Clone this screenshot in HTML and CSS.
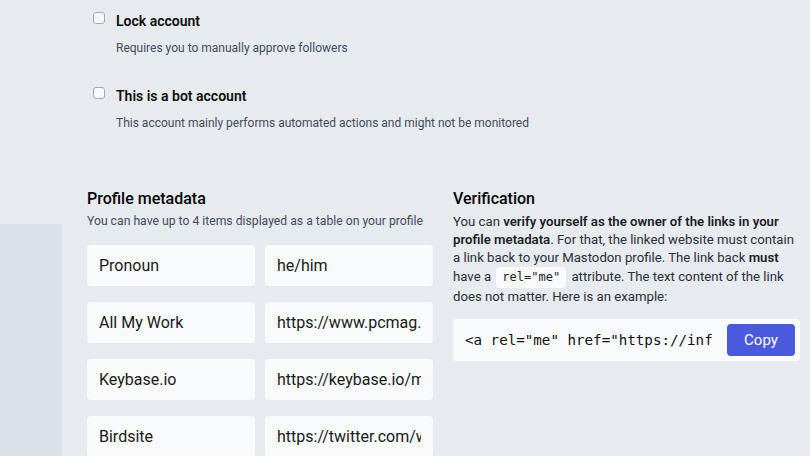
FILE: index.html
```html
<!DOCTYPE html>
<html>
<head>
<meta charset="utf-8">
<link rel="stylesheet" href="styles.css">
</head>
<body>
<div class="page">
  <aside class="side"><div class="side-fill"></div></aside>
  <main class="content">
    <div class="checks">
      <div class="check">
        <span class="box"></span>
        <div class="check-text">
          <div class="check-label">Lock account</div>
          <div class="check-hint">Requires you to manually approve followers</div>
        </div>
      </div>
      <div class="check">
        <span class="box"></span>
        <div class="check-text">
          <div class="check-label">This is a bot account</div>
          <div class="check-hint">This account mainly performs automated actions and might not be monitored</div>
        </div>
      </div>
    </div>
    <div class="cols">
      <section class="col">
        <h3 class="heading">Profile metadata</h3>
        <p class="sub">You can have up to 4 items displayed as a table on your profile</p>
        <div class="fields">
          <div class="field"><span class="val">Pronoun</span></div><div class="field"><span class="val">he/him</span></div>
          <div class="field"><span class="val">All My Work</span></div><div class="field"><span class="val">https://www.pcmag.com/authors/max-eddy</span></div>
          <div class="field"><span class="val">Keybase.io</span></div><div class="field"><span class="val">https://keybase.io/maxeddy</span></div>
          <div class="field"><span class="val">Birdsite</span></div><div class="field"><span class="val">https://twitter.com/wiredmaxeddy</span></div>
        </div>
      </section>
      <section class="col">
        <h3 class="heading">Verification</h3>
        <p class="para">You can <strong>verify yourself as the owner of the links in your profile metadata</strong>. For that, the linked website must contain a link back to your Mastodon profile. The link back <strong>must</strong> have a <code class="chip">rel="me"</code> attribute. The text content of the link does not matter. Here is an example:</p>
        <div class="codebox">
          <span class="code">&lt;a rel="me" href="https://infosec.exchange/@wired">Mastodon&lt;/a></span>
          <button class="copy">Copy</button>
        </div>
      </section>
    </div>
  </main>
</div>
</body>
</html>
```
FILE: styles.css
```css
* { box-sizing: border-box; }
html, body { margin: 0; padding: 0; }
body {
  background: #e7eaef;
  font-family: Roboto, "Liberation Sans", sans-serif;
  color: #000;
  width: 810px;
  height: 456px;
  overflow: hidden;
}
.page {
  display: grid;
  grid-template-columns: 62px 1fr;
  height: 456px;
}
.side { display: flex; flex-direction: column; }
.side-fill {
  margin-top: 224px;
  flex: 1;
  background: #dae1e8;
}
.content {
  padding: 0 10px 0 25px;
  min-width: 0;
}
.checks {
  padding: 12px 0 0 6px;
  display: flex;
  flex-direction: column;
  gap: 32px;
}
.check {
  display: flex;
  gap: 11px;
  align-items: flex-start;
}
.box {
  flex: none;
  width: 12px;
  height: 12px;
  border: 1px solid #a3a8b3;
  border-radius: 3px;
  background: #f9fafb;
}
.check-label {
  font-size: 14px;
  font-weight: 600;
  line-height: 16px;
  margin-top: 1px;
  color: #0d0d0d;
}
.check-hint {
  font-size: 12px;
  line-height: 14px;
  color: #444b5d;
  margin-top: 12px;
}
.cols {
  margin-top: 59px;
  display: grid;
  grid-template-columns: 346px 347px;
  gap: 20px;
}
.col { min-width: 0; }
.heading {
  margin: 0;
  font-size: 16px;
  font-weight: 500;
  line-height: 20px;
  color: #000;
}
.sub {
  margin: 4px 0 0;
  font-size: 12.2px;
  line-height: 16px;
  color: #444b5d;
}
.fields {
  margin-top: 16px;
  display: grid;
  grid-template-columns: 168px 168px;
  column-gap: 10px;
  row-gap: 16px;
}
.field {
  height: 41px;
  background: #f9fafb;
  border-radius: 4px;
  padding: 0 12px;
  display: flex;
  align-items: center;
}
.val {
  display: block;
  width: 100%;
  font-size: 16px;
  line-height: 20px;
  color: #1a1a1a;
  white-space: nowrap;
  overflow: hidden;
}
.para {
  margin: 4px 0 0;
  width: 345px;
  font-size: 13.2px;
  line-height: 18px;
  color: #2a2f3a;
}
.para strong { color: #1a1d24; font-weight: 600; }
.chip {
  display: inline-block;
  font-family: "DejaVu Sans Mono", monospace;
  font-size: 12px;
  line-height: 21px;
  vertical-align: 0;
  background: #f9fafb;
  border-radius: 4px;
  padding: 0 6px;
  margin: 0 2px;
  color: #222;
}
.codebox {
  margin-top: 13px;
  height: 42px;
  background: #f9fafb;
  border-radius: 4px;
  display: flex;
  align-items: center;
  padding: 0 5px 0 12px;
  gap: 14px;
}
.code {
  flex: 1;
  min-width: 0;
  overflow: hidden;
  white-space: nowrap;
  font-family: "DejaVu Sans Mono", monospace;
  font-size: 14.2px;
  color: #111;
}
.copy {
  flex: none;
  width: 68px;
  height: 32px;
  border: none;
  border-radius: 4px;
  background: #4a5ade;
  color: #fff;
  font-family: Roboto, "Liberation Sans", sans-serif;
  font-size: 15px;
}
```
